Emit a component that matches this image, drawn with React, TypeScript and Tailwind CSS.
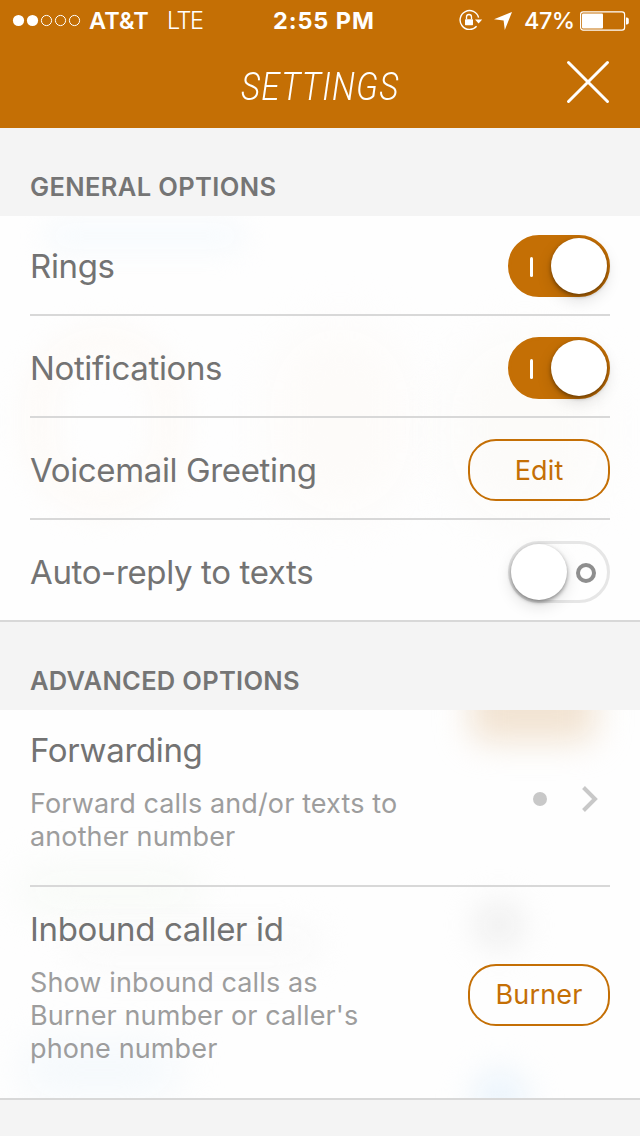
import { useState, type ReactNode } from "react";

function StatusBar() {
  return (
    <div className="flex h-10 items-center whitespace-nowrap pl-3 leading-10 text-white">
      <svg width="70" height="14" viewBox="0 0 70 14" fill="none" stroke="white" className="shrink-0">
        <circle cx="6.5" cy="7.5" r="5.6" fill="white" stroke="none" />
        <circle cx="20.5" cy="7.5" r="5.6" fill="white" stroke="none" />
        <circle cx="34.5" cy="7.5" r="5.1" />
        <circle cx="48.5" cy="7.5" r="5.1" />
        <circle cx="62.5" cy="7.5" r="5.1" />
      </svg>
      <span className="ml-[7px] mt-[2px] w-[78px] text-[23.5px] font-semibold tracking-[0.1px]">AT&amp;T</span>
      <span className="mt-[2px] w-[106px] text-[23.5px] font-light tracking-[-1.5px]">LTE</span>
      <span className="mt-[2px] w-[186px] text-[23.5px] font-bold tracking-[0.9px]">2:55 PM</span>
      <svg width="24" height="24" viewBox="0 0 24 24" fill="none" stroke="white" className="shrink-0">
        <path d="M19.6 9.6A9.4 9.4 0 1 0 17.6 18.2" strokeWidth="1.4" />
        <path d="M16 11.6h7.2l-3.6 3.8z" fill="white" stroke="none" />
        <rect x="6" y="11.2" width="8" height="6" rx="0.6" fill="white" stroke="none" />
        <path d="M7.5 11.2V9a2.5 2.5 0 0 1 5 0v2.2" strokeWidth="1.3" />
      </svg>
      <svg width="18" height="18" viewBox="0 0 18 18" fill="white" className="ml-[11px] mt-[1px] shrink-0">
        <path d="M18 0L10.8 18L9.6 8.4L0 7.2z" />
      </svg>
      <span className="ml-3 mt-[2px] w-14 text-[23.5px] font-medium tracking-[-0.5px]">47%</span>
      <svg width="50" height="20" viewBox="0 0 50 20" fill="none" className="mt-[1px] shrink-0">
        <rect x="0.6" y="0.9" width="44" height="18.2" rx="2.6" stroke="white" strokeWidth="1.2" />
        <rect x="2" y="2.5" width="21" height="15" rx="1" fill="white" />
        <path d="M46 6.5h.8a2 2 0 0 1 2 2v3a2 2 0 0 1-2 2H46z" fill="white" />
      </svg>
    </div>
  );
}

function Toggle({ initial }: { initial: boolean }) {
  const [on, setOn] = useState(initial);

  return (
    <button
      onClick={() => setOn(!on)}
      className={`flex h-[62px] w-[102px] shrink-0 items-center justify-between rounded-full border-[3px] ${
        on ? "border-[#c46f05] bg-[#c46f05]" : "flex-row-reverse border-[#e6e6e6] bg-transparent"
      }`}
    >
      {on ? (
        <span className="ml-[19px] mt-[2px] h-5 w-[3px] rounded-full bg-white" />
      ) : (
        <span className="mr-[11px] mt-[2px] h-5 w-5 rounded-full border-4 border-[#8e8e8e]" />
      )}
      <span className="h-14 w-14 rounded-full bg-white shadow-[0_2px_4px_rgba(0,0,0,0.42),0_6px_16px_rgba(0,0,0,0.13)]" />
    </button>
  );
}

function PillButton({ children }: { children: ReactNode }) {
  return (
    <button className="h-[62px] w-[142px] shrink-0 rounded-[28px] border-2 border-[#c46f05] text-[27px] leading-none tracking-[0.15px] text-[#c46f05]">
      {children}
    </button>
  );
}

function SectionHeader({ children }: { children: ReactNode }) {
  return (
    <h2 className="h-[88px] bg-[#f4f4f4] pl-[30px] pt-[39px] text-[25.5px] font-semibold leading-10 text-[#757575]">
      {children}
    </h2>
  );
}

const label = "text-[33px] leading-10 tracking-[-0.36px] text-[#737373] whitespace-nowrap";
const note = "text-[27px] leading-[33px] tracking-[0.12px] text-[#9d9d9d] whitespace-nowrap";

export default function App() {
  return (
    <div className="flex h-[1136px] w-[640px] flex-col overflow-hidden bg-[#f4f4f4] font-['Inter',sans-serif]">
      <header className="h-32 shrink-0 bg-[#c46f05]">
        <StatusBar />
        <div className="grid h-[88px] grid-cols-[1fr_auto_1fr] items-center">
          <span />
          <h1 className="mt-[5px] scale-x-[0.84] font-['Roboto',sans-serif] text-[39.5px] font-light italic leading-none tracking-[1.4px] text-white">
            SETTINGS
          </h1>
          <button className="mb-1 mr-[30px] justify-self-end">
            <svg width="44" height="44" viewBox="0 0 44 44" stroke="white" strokeWidth="3" strokeLinecap="round">
              <path d="M2.5 2.5L41.5 41.5M41.5 2.5L2.5 41.5" />
            </svg>
          </button>
        </div>
      </header>

      <SectionHeader>
        <span className="tracking-[0.37px]">GENERAL OPTIONS</span>
      </SectionHeader>
      <section className="relative isolate shrink-0 overflow-hidden border-b-2 border-[#d8d8d8] bg-[#fefefe]">
        {/* blurred content showing through the sheet */}
        <div className="absolute inset-0 -z-10">
          <div className="absolute left-[45px] top-[6px] h-[28px] w-[200px] rounded-full bg-[#f6fafd] blur-[14px]" />
          <div className="absolute left-[24px] top-[110px] h-[190px] w-[160px] rounded-full border-[30px] border-[#fdfaf7] blur-[14px]" />
          <div className="absolute left-[270px] top-[110px] h-[190px] w-[140px] rounded-full bg-[#fdfbf9] blur-[24px]" />
          <div className="absolute left-[450px] top-[120px] h-[190px] w-[150px] rounded-full bg-[#fcfbf9] blur-[24px]" />
        </div>
        <div className="mx-[30px] flex h-[100px] items-center justify-between border-b-2 border-[#d8d8d8] pt-[2px]">
          <span className={label}>Rings</span>
          <Toggle initial={true} />
        </div>
        <div className="mx-[30px] flex h-[102px] items-center justify-between border-b-2 border-[#d8d8d8] pt-1">
          <span className={label}>Notifications</span>
          <Toggle initial={true} />
        </div>
        <div className="mx-[30px] flex h-[102px] items-center justify-between border-b-2 border-[#d8d8d8] pt-1">
          <span className={label}>Voicemail Greeting</span>
          <PillButton>Edit</PillButton>
        </div>
        <div className="mx-[30px] flex h-[100px] items-center justify-between pt-1">
          <span className={label}>Auto-reply to texts</span>
          <Toggle initial={false} />
        </div>
      </section>

      <SectionHeader>
        <span className="tracking-[0.3px]">ADVANCED OPTIONS</span>
      </SectionHeader>
      <section className="relative isolate shrink-0 overflow-hidden border-b-2 border-[#d8d8d8] bg-[#fefefe]">
        <div className="absolute inset-0 -z-10">
          <div className="absolute left-[470px] top-[-40px] h-[72px] w-[126px] rounded-2xl bg-[#f2e4d3] blur-[16px]" />
          <div className="absolute left-[20px] top-[160px] h-[40px] w-[180px] rounded-full bg-[#f7faf6] blur-[20px]" />
          <div className="absolute left-[70px] top-[215px] h-[40px] w-[250px] rounded-full bg-[#fafafa] blur-[16px]" />
          <div className="absolute left-[476px] top-[192px] h-[46px] w-[46px] rounded-full bg-[#eeeeee] blur-[16px]" />
          <div className="absolute left-[20px] top-[330px] h-[60px] w-[160px] rounded-full bg-[#f5f9fc] blur-[20px]" />
          <div className="absolute left-[472px] top-[360px] h-[56px] w-[56px] rounded-full bg-[#ebf4fc] blur-[16px]" />
        </div>
        <div className="mx-[30px] flex h-[177px] items-center justify-between border-b-2 border-[#d8d8d8]">
          <div className="h-full pt-5">
            <div className={label}>Forwarding</div>
            <div className={`mt-[17px] ${note}`}>
              Forward calls and/or texts to
              <br />
              another number
            </div>
          </div>
          <div className="mr-[11px] mt-[3px] flex items-center gap-[34px]">
            <span className="h-[14px] w-[14px] rounded-full bg-[#c8c8c8]" />
            <svg width="18" height="28" viewBox="0 0 18 28" fill="none" stroke="#c8c8c8" strokeWidth="4">
              <path d="M2.5 2.5L14 14L2.5 25.5" />
            </svg>
          </div>
        </div>
        <div className="mx-[30px] flex h-[211px] items-center justify-between">
          <div className="h-full pt-[22px]">
            <div className={label}>Inbound caller id</div>
            <div className={`mt-[17px] ${note}`}>
              Show inbound calls as
              <br />
              Burner number or caller's
              <br />
              phone number
            </div>
          </div>
          <div className="mt-1">
            <PillButton>Burner</PillButton>
          </div>
        </div>
      </section>
    </div>
  );
}
